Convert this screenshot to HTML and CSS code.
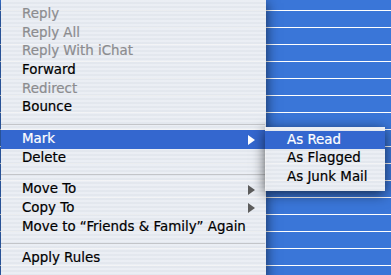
FILE: index.html
```html
<!DOCTYPE html>
<html lang="en">
<head>
	<meta charset="UTF-8">
	<title>Mail context menu</title>
	<link rel="stylesheet" href="styles.css">
</head>
<body>
	<div id="desktop">
		<ul class="menu" id="main-menu">
			<li class="item off">Reply</li>
			<li class="item off">Reply All</li>
			<li class="item off">Reply With iChat</li>
			<li class="item">Forward</li>
			<li class="item off">Redirect</li>
			<li class="item">Bounce</li>
			<li class="sep"></li>
			<li class="item on has-sub">Mark</li>
			<li class="item">Delete</li>
			<li class="sep"></li>
			<li class="item has-sub">Move To</li>
			<li class="item has-sub">Copy To</li>
			<li class="item">Move to “Friends &amp; Family” Again</li>
			<li class="sep"></li>
			<li class="item">Apply Rules</li>
		</ul>
		<ul class="menu" id="sub-menu">
			<li class="item on">As Read</li>
			<li class="item">As Flagged</li>
			<li class="item">As Junk Mail</li>
		</ul>
	</div>
</body>
</html>
```
FILE: styles.css
```css
* {
	margin: 0;
	padding: 0;
	list-style: none;
}
html, body {
	height: 100%;
	overflow: hidden;
}
body {
	font-family: "DejaVu Sans", "Noto Sans", sans-serif;
	font-size: 13.4px;
	/* selected message rows behind the menu */
	background: repeating-linear-gradient(to bottom, #3a76d8 0, #3a76d8 10px, #fff 10px, #fff 11px, #3a76d8 11px, #3a76d8 17px);
}
#desktop {
	position: relative;
	height: 100%;
}
.menu {
	position: absolute;
	background: repeating-linear-gradient(to bottom, rgba(242, 243, 245, 0.96) 0, rgba(242, 243, 245, 0.96) 2px, rgba(234, 236, 239, 0.96) 2px, rgba(234, 236, 239, 0.96) 4px);
	box-shadow: 0 3px 12px rgba(0, 0, 0, 0.65);
}
#main-menu {
	left: 1px;
	top: 0;
	width: 265px;
	padding: 5px 0 12px;
}
#sub-menu {
	left: 265px;
	top: 126.5px;
	width: 120px;
	padding: 4px 0;
	z-index: 2;
}
.item {
	position: relative;
	height: 18.7px;
	line-height: 18.7px;
	padding-left: 21px;
	color: #000;
	white-space: nowrap;
	-webkit-text-stroke: 0.2px currentColor;
}
#sub-menu .item {
	padding-left: 22px;
}
.item.off {
	color: #8c8c8f;
}
.item.on {
	background: #3467cf;
	color: #fff;
}
.has-sub::after {
	content: "";
	position: absolute;
	right: 11px;
	top: 4.5px;
	border-left: 7px solid #5c5c5c;
	border-top: 5px solid transparent;
	border-bottom: 5px solid transparent;
}
.on.has-sub::after {
	border-left-color: #fff;
}
.sep {
	height: 12.9px;
	position: relative;
}
.sep::before {
	content: "";
	position: absolute;
	left: 0;
	right: 1px;
	top: 6.5px;
	border-top: 1px solid #c3c5c9;
}
```
